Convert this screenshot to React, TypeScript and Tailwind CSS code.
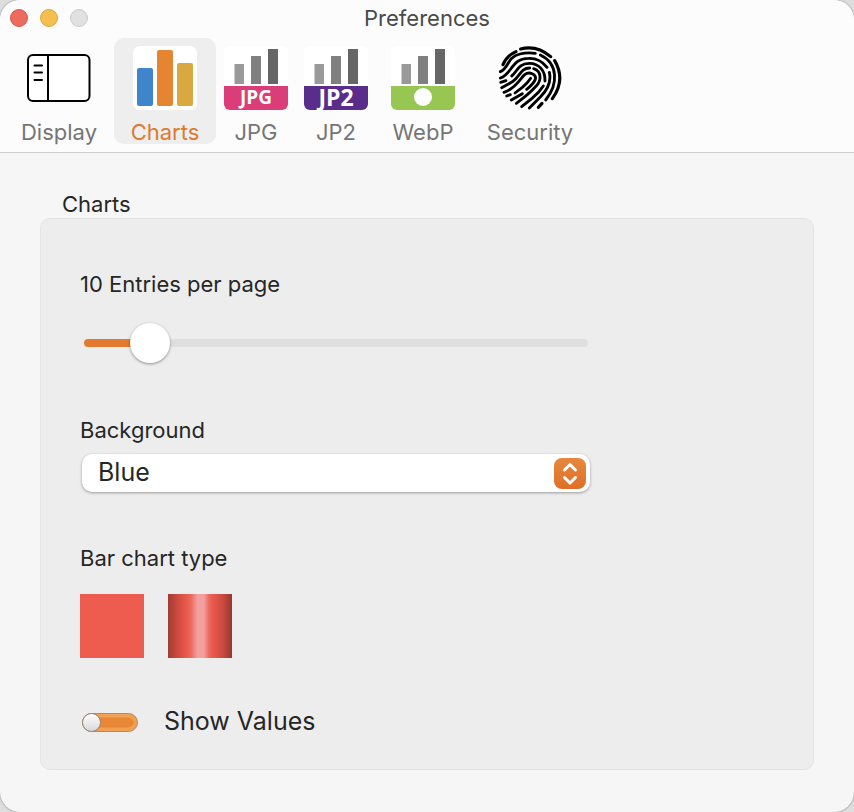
import { useState } from "react";
import type { ReactNode } from "react";

interface Tab {
  id: string;
  label: string;
  width: string;
  icon: ReactNode;
}

const tabs: Tab[] = [
  { id: "display", label: "Display", width: "w-[110px]", icon: <DisplayIcon /> },
  { id: "charts", label: "Charts", width: "w-[102px]", icon: <ChartsIcon /> },
  { id: "jpg", label: "JPG", width: "w-20", icon: <FormatIcon color="#da3d78" text="JPG" textClass="text-[19px]" /> },
  { id: "jp2", label: "JP2", width: "w-20", icon: <FormatIcon color="#5b2d8a" text="JP2" textClass="text-[23px]" /> },
  { id: "webp", label: "WebP", width: "w-[94px]", icon: <FormatIcon color="#98c653" /> },
  { id: "security", label: "Security", width: "w-[120px]", icon: <FingerprintIcon /> }
];

export default function App() {
  const [active, setActive] = useState("charts");
  const [entries, setEntries] = useState(10);
  const [showValues, setShowValues] = useState(false);

  return (
    <div className="min-h-dvh bg-[#dedede] font-['Inter','Liberation_Sans',sans-serif] text-[#262626]">
      <div className="flex min-h-dvh flex-col overflow-hidden rounded-[20px] bg-[#f6f6f6] shadow-[0_0_2px_rgba(0,0,0,0.5)]">
        <header className="border-b border-[#cfcfcf] bg-[#fcfcfc] px-1 pb-2">
          <div className="grid h-[38px] grid-cols-3 items-center px-1.5 pb-0.5">
            <div className="flex gap-3">
              <button type="button" aria-label="Close" className="size-[18px] rounded-full border border-[#d9564c] bg-[#ed6a5e]" />
              <button type="button" aria-label="Minimize" className="size-[18px] rounded-full border border-[#dba63c] bg-[#f5bf4f]" />
              <button type="button" aria-label="Zoom" className="size-[18px] rounded-full border border-[#cbcbcb] bg-[#e1e1e1]" />
            </div>
            <h1 className="text-center text-[22px] leading-7 text-[#4a4a4a]">Preferences</h1>
          </div>
          <nav className="flex">
            {tabs.map((tab) => (
              <button
                key={tab.id}
                type="button"
                onClick={() => setActive(tab.id)}
                className={`flex h-[106px] shrink-0 flex-col items-center rounded-[10px] pt-2 ${tab.width} ${
                  active === tab.id ? "bg-[#eeeeee] text-[#dd7a31]" : "text-[#757575]"
                }`}
              >
                {tab.icon}
                <span className="mt-2 text-[22px] leading-7">{tab.label}</span>
              </button>
            ))}
          </nav>
        </header>

        <main className="flex flex-1 flex-col px-10 pt-[37px] pb-[42px]">
          <h2 className="pl-[22px] text-[22px] leading-7">Charts</h2>
          <section className="flex-1 rounded-[10px] border border-[#e3e3e3] bg-[#ededed] px-[39px] pt-[51px] pb-8">
            <label htmlFor="entries" className="block text-[22px] leading-7">
              {entries} Entries per page
            </label>
            <EntriesSlider value={entries} onChange={setEntries} />

            <label htmlFor="background" className="mt-[69px] block text-[22px] leading-7">
              Background
            </label>
            <div className="relative mx-0.5 mt-2.5 max-w-[508px]">
              <select
                id="background"
                defaultValue="Blue"
                className="block h-[38px] w-full appearance-none rounded-[10px] bg-white pr-12 pb-0.5 pl-4 text-[25px] leading-8 shadow-[0_1px_3px_rgba(0,0,0,0.35)]"
              >
                <option>Blue</option>
                <option>Gray</option>
                <option>White</option>
              </select>
              <span className="pointer-events-none absolute top-1 right-1 h-[31px] w-8 rounded-[8px] bg-linear-to-b from-[#e6873d] to-[#e06f27]">
                <svg viewBox="0 0 32 31" className="h-full w-full" fill="none" stroke="#fff" strokeWidth="3" strokeLinecap="round" strokeLinejoin="round" aria-hidden="true">
                  <path d="M10.5 12 16 6.5 21.5 12M10.5 19.5 16 25 21.5 19.5" />
                </svg>
              </span>
            </div>

            <h3 className="mt-[52px] text-[22px] leading-7">Bar chart type</h3>
            <div className="mt-[22px] flex gap-6">
              <button type="button" aria-label="Flat bars" className="size-16 bg-[#ee5c4f]" />
              <button
                type="button"
                aria-label="Cylinder bars"
                className="size-16 bg-[linear-gradient(90deg,#a03a31_0%,#c84a3f_14%,#ea594b_28%,#ec6a5e_36%,#f2a09f_46%,#f2a09f_56%,#ec6a5e_64%,#ea594b_70%,#c84a3f_86%,#98362d_100%)]"
              />
            </div>

            <label className="mt-[47px] flex w-fit items-center gap-[26px] text-[25px] leading-8">
              <input
                type="checkbox"
                checked={showValues}
                onChange={(e) => setShowValues(e.target.checked)}
                className="sr-only"
              />
              <SwitchTrack on={showValues} />
              Show Values
            </label>
          </section>
        </main>
      </div>
    </div>
  );
}

function EntriesSlider({ value, onChange }: { value: number; onChange: (value: number) => void }) {
  const ratio = (value - 5) / 50;
  return (
    <input
      id="entries"
      type="range"
      min={5}
      max={55}
      value={value}
      onChange={(e) => onChange(Number(e.target.value))}
      style={{
        backgroundImage: `linear-gradient(90deg, #e27a30 ${ratio * 100 + 2}%, #dfdfdf ${ratio * 100 + 2}%)`
      }}
      className="mx-1 mt-[41px] block h-2 w-full max-w-[504px] appearance-none rounded-full [&::-webkit-slider-thumb]:size-10 [&::-webkit-slider-thumb]:appearance-none [&::-webkit-slider-thumb]:rounded-full [&::-webkit-slider-thumb]:bg-white [&::-webkit-slider-thumb]:shadow-[0_1px_3px_rgba(0,0,0,0.4)]"
    />
  );
}

function SwitchTrack({ on }: { on: boolean }) {
  return (
    <svg viewBox="0 0 58 22" className="h-[22px] w-[58px]" aria-hidden="true">
      <defs>
        <linearGradient id="knob" x1="0" y1="0" x2="0" y2="1">
          <stop offset="0" stopColor="#ffffff" />
          <stop offset="1" stopColor="#d8d8d8" />
        </linearGradient>
      </defs>
      <rect x="2.5" y="3.5" width="55" height="18" rx="9" fill="#f0a052" stroke="#b58a63" />
      <path d="M12 7.5H49Q53 9 54 12.5Q53 16 49 17.5H12Z" fill="#e88735" />
      <circle cx={on ? 48.5 : 11.5} cy="12.5" r="9" fill="url(#knob)" stroke="#8b8681" />
    </svg>
  );
}

function DisplayIcon() {
  return (
    <svg viewBox="0 0 64 64" className="size-16 shrink-0" fill="none" stroke="#000" strokeWidth="2" aria-hidden="true">
      <rect x="1" y="9" width="61.5" height="46" rx="5" fill="#fff" />
      <path d="M21 9V55" />
      <path d="M7.5 19.5H15M7.5 26.5H15M7.5 34H15" strokeLinecap="round" />
    </svg>
  );
}

function ChartsIcon() {
  return (
    <svg viewBox="0 0 64 64" className="size-16 shrink-0" aria-hidden="true">
      <rect width="64" height="64" rx="7" fill="#fff" />
      <rect x="4" y="22" width="16" height="38" rx="2" fill="#3f85cc" />
      <rect x="24" y="4" width="16" height="56" rx="2" fill="#e58531" />
      <rect x="44" y="17" width="16" height="43" rx="2" fill="#daa840" />
    </svg>
  );
}

function FormatIcon({ color, text, textClass }: { color: string; text?: string; textClass?: string }) {
  return (
    <span className="flex size-16 shrink-0 flex-col rounded-[6px] bg-white">
      <svg viewBox="0 0 64 40" className="h-10 w-16" aria-hidden="true">
        <rect x="10.5" y="18" width="9.5" height="20" fill="#999" />
        <rect x="27" y="10" width="10" height="28" fill="#808080" />
        <rect x="44" y="3" width="10" height="35" fill="#666" />
      </svg>
      <span
        style={{ backgroundColor: color }}
        className="flex h-6 items-center justify-center rounded-b-[6px] pb-0.5 font-['Open_Sans',sans-serif] font-bold text-white"
      >
        {text ? <span className={`leading-5 ${textClass}`}>{text}</span> : <span className="size-[18px] rounded-full bg-white" />}
      </span>
    </span>
  );
}

function FingerprintIcon() {
  return (
    <svg viewBox="24 18 192 192" className="size-16 shrink-0" fill="none" stroke="#000" strokeWidth="8.5" strokeLinecap="round" aria-hidden="true">
      <path d="M39 74Q50 47 78 35" strokeWidth="9.5" />
      <path d="M92 27Q140 14 182 50" strokeWidth="9.5" />
      <path d="M194 62Q228 120 187 176" strokeWidth="9.5" />
      <path d="M31 95C57 84 50 52 90 42Q112 36 136 40" />
      <path d="M151 45C204 70 206 132 167 180" />
      <path d="M31 114C66 103 64 55 116 55Q150 54 171 82" />
      <path d="M65 108C81 96 84 70 118 70C148 70 166 93 165 123" />
      <path d="M178 97Q187 135 151 171L118 204" />
      <path d="M119 84C89 84 90 114 62 128Q48 136 35 143" />
      <path d="M32 127L48 122" />
      <path d="M131 86C154 93 156 120 138 139Q114 165 79 190" />
      <path d="M42 157C78 145 90 116 104 104C118 93 140 103 136 118Q130 132 110 148" />
      <path d="M122 115Q113 129 97 142L75 159" />
      <path d="M50 168L61 164M64 180L97 161" />
      <path d="M160 138Q148 157 126 175L95 200" />
      <path d="M145 202L156 190" strokeWidth="9.5" />
    </svg>
  );
}
